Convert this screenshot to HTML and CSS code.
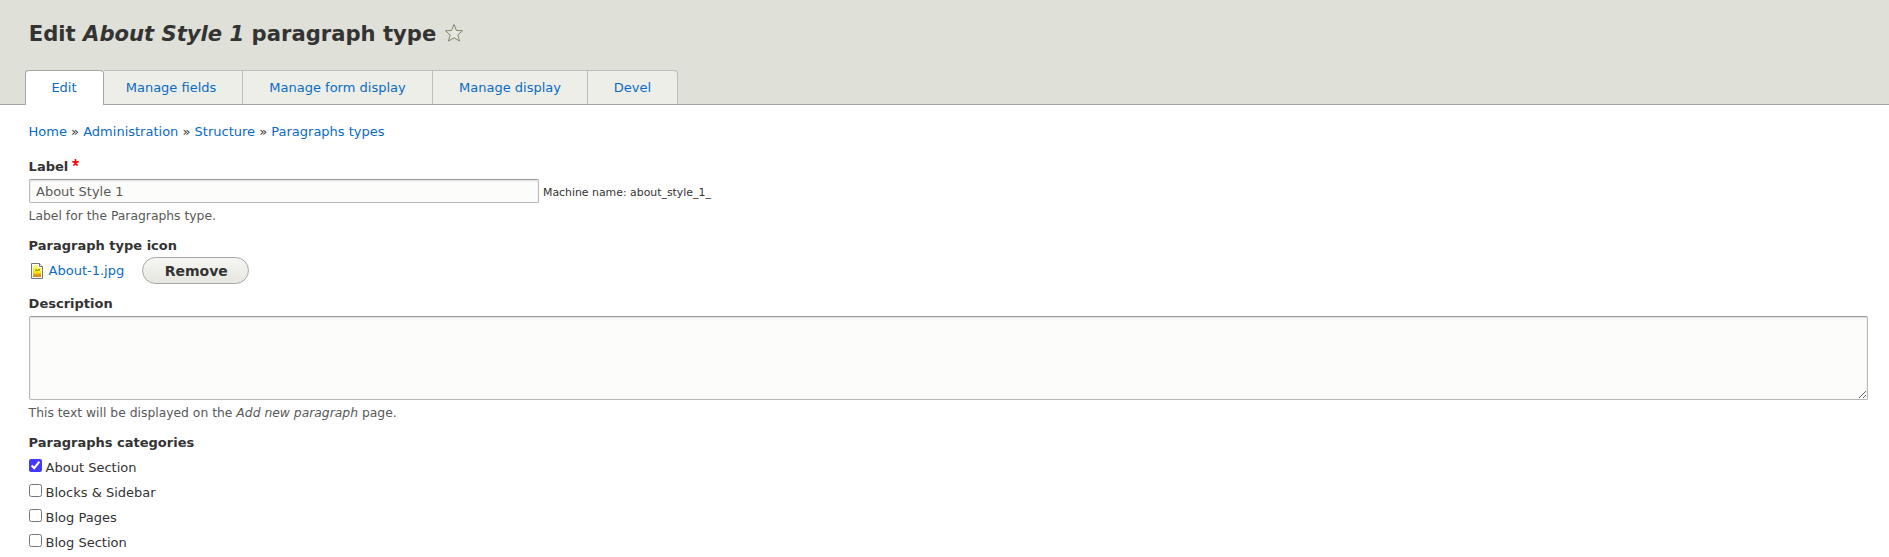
FILE: index.html
```html
<!DOCTYPE html>
<html lang="en">
<head>
<meta charset="utf-8">
<title>Edit About Style 1 paragraph type</title>
<link rel="stylesheet" href="styles.css">
</head>
<body>
<header class="page-header">
  <div class="title-row">
    <h1 class="page-title">Edit <em>About Style 1</em> paragraph type</h1>
    <svg class="star" width="20" height="20" viewBox="0 0 20 20"><path d="M10 1.5L12.4 7.4L18.5 7.8L13.8 11.8L15.5 18L10 14.8L4.5 18L6.2 11.8L1.5 7.8L7.6 7.4Z"/></svg>
  </div>
  <nav class="tabs">
    <a class="tab tab-active" href="#">Edit</a>
    <a class="tab tab-fields" href="#">Manage fields</a>
    <a class="tab tab-form" href="#">Manage form display</a>
    <a class="tab tab-display" href="#">Manage display</a>
    <a class="tab tab-devel" href="#">Devel</a>
  </nav>
</header>
<main class="content">
  <nav class="breadcrumb"><a href="#">Home</a> » <a href="#">Administration</a> » <a href="#">Structure</a> » <a href="#">Paragraphs types</a></nav>
  <form>
    <div class="item">
      <label class="heading" for="label">Label<svg class="required" width="7" height="7" viewBox="0 0 7 7"><path d="M3.5 0V3.6M0.3 2.5L3.5 3.6L6.7 2.5M1.5 6.6L3.5 3.6L5.5 6.6"/></svg></label>
      <div class="input-row">
        <input class="text-input" id="label" type="text" value="About Style 1">
        <span class="machine-name">Machine name: about_style_1_</span>
      </div>
      <div class="description">Label for the Paragraphs type.</div>
    </div>
    <div class="item">
      <div class="heading">Paragraph type icon</div>
      <div class="file-row">
        <svg class="file-icon" width="16" height="16" viewBox="0 0 16 16">
          <defs><linearGradient id="photo" x1="0" y1="0" x2="0" y2="1"><stop offset="0" stop-color="#fffcb0"/><stop offset=".3" stop-color="#fdf540"/><stop offset=".65" stop-color="#f7e410"/><stop offset=".8" stop-color="#e0a010"/><stop offset="1" stop-color="#d98a20"/></linearGradient></defs>
          <path d="M2.5.5H10.5L13.5 3.5V15.5H2.5Z" fill="#fff" stroke="#777"/>
          <path d="M10.5.5V3.5H13.5" fill="#eee" stroke="#777"/>
          <path d="M4 2H9V5H12V14H4Z" fill="url(#photo)"/>
          <path d="M6 7.5L7 6.8L8.5 7.5L10 6.5L11 7.2" fill="none" stroke="#62600e" stroke-width=".9"/>
        </svg>
        <a class="file-link" href="#">About-1.jpg</a>
        <button class="button" type="button">Remove</button>
      </div>
    </div>
    <div class="item">
      <label class="heading" for="description">Description</label>
      <textarea class="textarea" id="description"></textarea>
      <div class="description">This text will be displayed on the <em>Add new paragraph</em> page.</div>
    </div>
    <div class="item">
      <div class="heading">Paragraphs categories</div>
      <div class="options">
        <label class="option"><input class="checkbox" type="checkbox" checked><span>About Section</span></label>
        <label class="option"><input class="checkbox" type="checkbox"><span>Blocks &amp; Sidebar</span></label>
        <label class="option"><input class="checkbox" type="checkbox"><span>Blog Pages</span></label>
        <label class="option"><input class="checkbox" type="checkbox"><span>Blog Section</span></label>
      </div>
    </div>
  </form>
</main>
</body>
</html>
```
FILE: styles.css
```css
* { box-sizing: border-box; }
body {
  margin: 0;
  height: 557px;
  overflow: hidden;
  background: #fff;
  color: #333;
  font: 13px/19px "DejaVu Sans", sans-serif;
}
a { color: #0a6bc4; text-decoration: none; }
.page-header {
  display: flex;
  flex-direction: column;
  justify-content: space-between;
  height: 105px;
  padding: 19px 0 0 25px;
  background: #dfe0d8;
  border-bottom: 1px solid #a6a6a6;
}
.title-row { display: flex; align-items: center; gap: 8px; height: 29px; padding-left: 3.8px; }
.page-title { margin: 0; font-size: 21.13px; line-height: 29px; font-weight: bold; white-space: nowrap; }
.star { margin-top: -1px; fill: #e6e7df; stroke: #84846b; stroke-width: 1; stroke-linejoin: round; }
.tabs { display: flex; height: 35px; margin-bottom: -1px; }
.tab {
  height: 34px;
  border: 1px solid #bdbdbd;
  border-width: 1px 1px 0 0;
  background: #edeee8;
  line-height: 34px;
  text-align: center;
}
.tab-active {
  width: 79px;
  height: 35px;
  padding-right: 1px;
  border: 1px solid #a6a6a6;
  border-bottom: 0;
  border-radius: 4px 4px 0 0;
  background: #fff;
}
.tab-fields { width: 139px; padding-right: 4px; }
.tab-form { width: 190px; }
.tab-display { width: 155px; }
.tab-devel { width: 90px; border-top-right-radius: 4px; }
.content { padding: 17px 21px 0 28.6px; }
.breadcrumb { height: 20px; margin-bottom: 15px; }
.item { margin-bottom: 10px; }
.heading { display: block; height: 20px; font-weight: bold; }
.required { margin-left: 4px; vertical-align: 5px; fill: none; stroke: #f00; stroke-width: 1.6; }
.input-row { display: flex; align-items: flex-start; gap: 4.4px; height: 24px; margin-top: 2px; }
.text-input, .textarea {
  border: 1px solid #b8b8b8;
  border-top-color: #999;
  border-radius: 2px;
  background: #fcfcfa;
  box-shadow: inset 0 1px 2px rgba(0, 0, 0, .125);
  color: #595959;
  font: 13px "DejaVu Sans", sans-serif;
}
.text-input { width: 510px; height: 24px; padding: 3px 6px 3px 6.4px; }
.machine-name { padding-top: 4px; font-size: 10.9px; }
.description { height: 20px; margin-top: 3px; padding-top: 1px; color: #595959; font-size: 12.35px; }
.file-row { display: flex; align-items: center; height: 27px; margin-top: 1px; }
.file-icon { margin: 1px 4px 0 0; }
.file-link { margin-right: 18px; }
.button {
  width: 107px;
  height: 27px;
  padding: 0 0 0 1px;
  border: 1px solid #a6a6a6;
  border-radius: 14px;
  background: linear-gradient(#f6f6f3, #e7e7df);
  color: #333;
  font: bold 14px "DejaVu Sans", sans-serif;
}
.textarea { display: block; width: 1839px; height: 84px; margin-top: 2px; resize: vertical; }
.options { padding-top: 4px; }
.option { display: flex; gap: 4px; height: 25px; line-height: 21px; }
.checkbox { flex: none; width: 13px; height: 13px; margin: 2px 0 0; accent-color: #4338ff; }
```
